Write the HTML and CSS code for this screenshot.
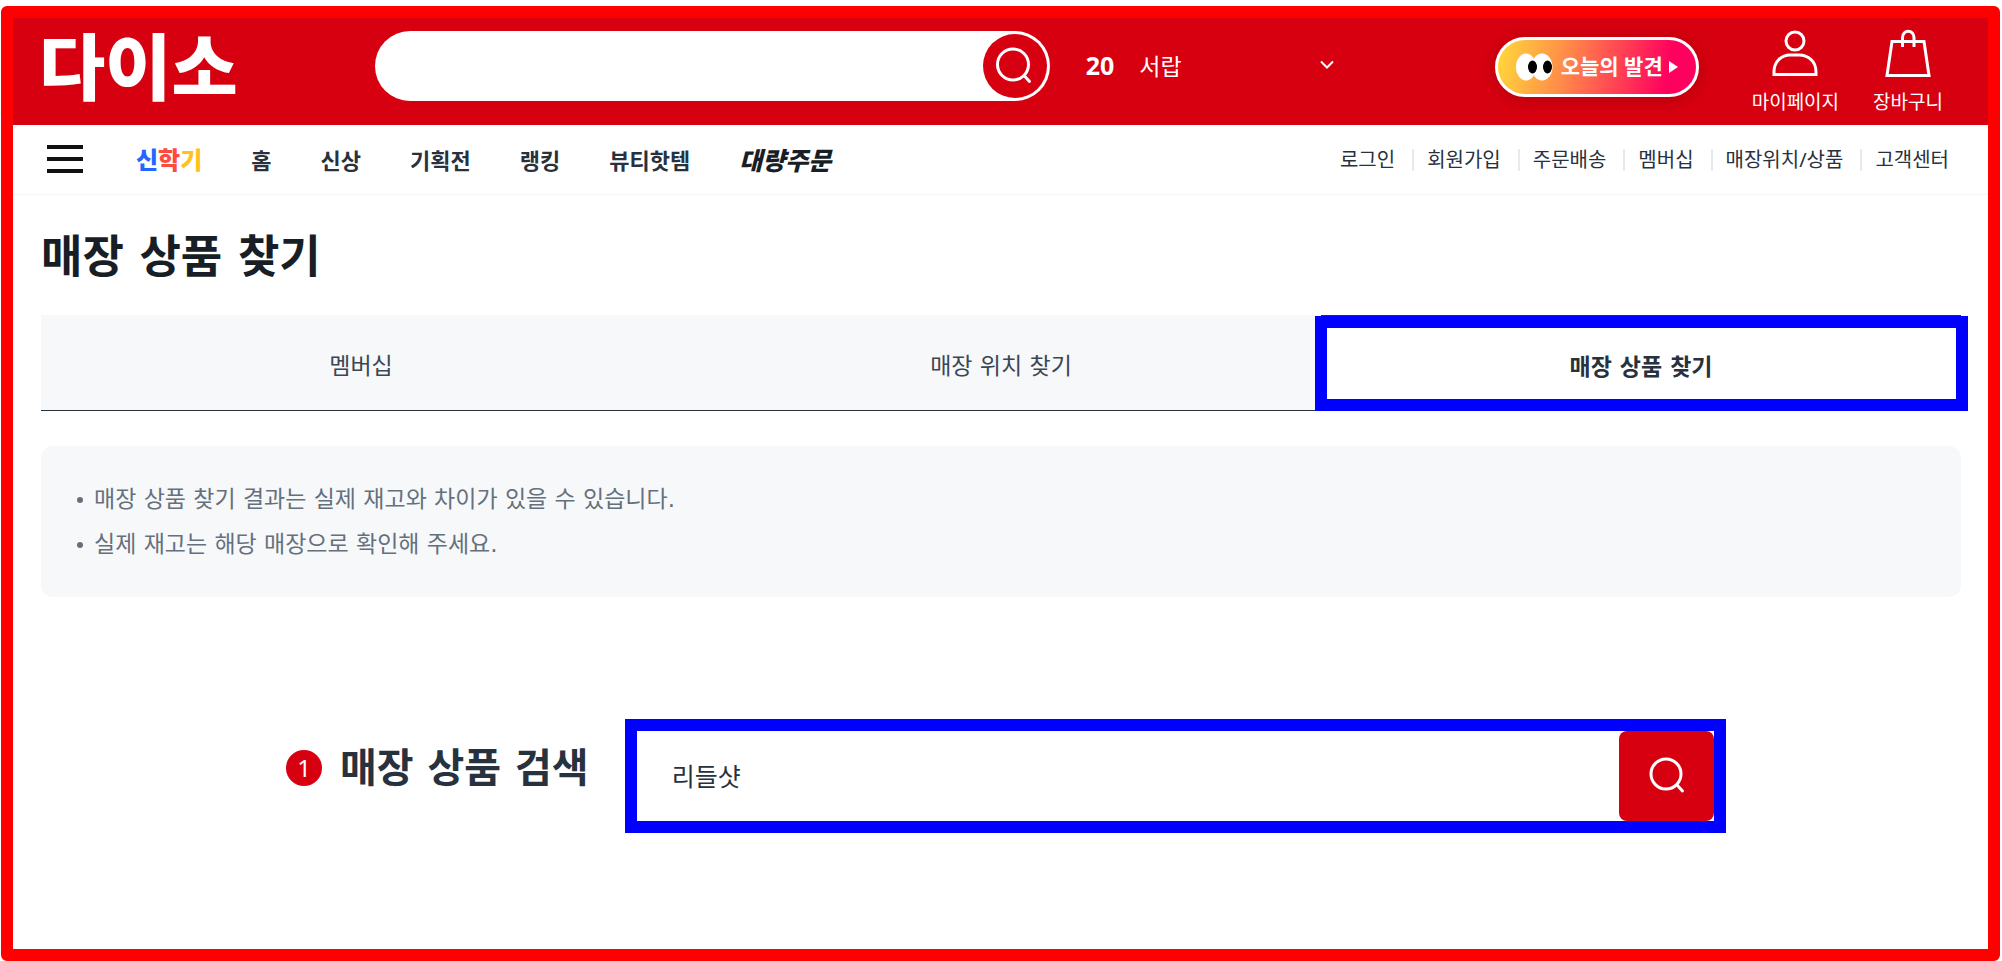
FILE: index.html
```html
<!DOCTYPE html>
<html lang="ko">
<head>
  <meta charset="UTF-8">
  <meta name="viewport" content="width=device-width, initial-scale=1.0">
  <title>매장 상품 찾기</title>
  <link rel="stylesheet" href="styles.css">
</head>
<body>
  <div class="page">
    <header class="header">
      <a class="logo" href="#">다이소</a>
      <form class="search">
        <input type="text" class="search-input" aria-label="검색어">
        <button type="button" class="search-btn" aria-label="검색">
          <svg width="40" height="40" viewBox="0 0 40 40" fill="none" stroke="#fff" stroke-width="3" stroke-linecap="round">
            <circle cx="18" cy="18.500" r="15.500"/>
            <path d="M29.500 30l5 5.500"/>
          </svg>
        </button>
      </form>
      <div class="rank">
        <span class="rank-num">20</span>
        <a class="rank-word" href="#">서랍</a>
        <button type="button" class="rank-toggle" aria-label="펼치기">
          <svg width="14" height="10" viewBox="0 0 14 10" fill="none" stroke="#fff" stroke-width="2">
            <path d="M1 1.5l6 6 6-6"/>
          </svg>
        </button>
      </div>
      <button type="button" class="today">
        <svg width="37" height="28" viewBox="0 0 37 28">
          <ellipse cx="10" cy="14" rx="10" ry="13.5" fill="#fff"/>
          <ellipse cx="26" cy="14" rx="10.5" ry="13.5" fill="#fff"/>
          <ellipse cx="16.5" cy="14" rx="4.5" ry="6.5" fill="#000"/>
          <ellipse cx="31.5" cy="14" rx="4.5" ry="6.5" fill="#000"/>
        </svg>
        <span>오늘의 발견</span>
        <svg width="9" height="12" viewBox="0 0 9 12" fill="#fff"><path d="M0 0l9 6-9 6z"/></svg>
      </button>
      <nav class="user">
        <a href="#">
          <svg width="48" height="48" viewBox="0 0 48 48" fill="none" stroke="#fff" stroke-width="3">
            <circle cx="24" cy="12" r="9"/>
            <path d="M3 45.500V43C3 32 11 26 19 26h9c9 0 17 6 17 17v2.500z"/>
          </svg>
          <span>마이페이지</span>
        </a>
        <a href="#">
          <svg width="48" height="48" viewBox="0 0 48 48" fill="none" stroke="#fff" stroke-width="3">
            <path d="M8 12.500h32l5 34H3z"/>
            <path d="M18.500 18V8.500a5.500 6 0 0 1 11.500 0V18"/>
          </svg>
          <span>장바구니</span>
        </a>
      </nav>
    </header>

    <div class="nav">
      <button type="button" class="menu-btn" aria-label="전체 메뉴">
        <span></span><span></span><span></span>
      </button>
      <nav class="main-menu">
        <a class="school" href="#"><span class="blue">신</span><span class="coral">학</span><span class="yellow">기</span></a>
        <a href="#">홈</a>
        <a href="#">신상</a>
        <a href="#">기획전</a>
        <a href="#">랭킹</a>
        <a href="#">뷰티핫템</a>
        <a class="bulk" href="#">대량주문</a>
      </nav>
      <nav class="sub-menu">
        <a href="#">로그인</a>
        <a href="#">회원가입</a>
        <a href="#">주문배송</a>
        <a href="#">멤버십</a>
        <a href="#">매장위치/상품</a>
        <a href="#">고객센터</a>
      </nav>
    </div>

    <main class="content">
      <h1>매장 상품 찾기</h1>
      <div class="tabs">
        <a class="tab" href="#">멤버십</a>
        <a class="tab" href="#">매장 위치 찾기</a>
        <a class="tab active" href="#">매장 상품 찾기</a>
      </div>
      <ul class="notice">
        <li>매장 상품 찾기 결과는 실제 재고와 차이가 있을 수 있습니다.</li>
        <li>실제 재고는 해당 매장으로 확인해 주세요.</li>
      </ul>
      <div class="finder">
        <h2><span class="step">1</span><label for="product">매장 상품 검색</label></h2>
        <form class="finder-form">
          <input type="text" id="product" value="리들샷">
          <button type="button" aria-label="상품 검색">
            <svg width="40" height="40" viewBox="0 0 40 40" fill="none" stroke="#fff" stroke-width="3" stroke-linecap="round">
              <circle cx="19" cy="18" r="15"/>
              <path d="M30.500 29.500l5 5.500"/>
            </svg>
          </button>
        </form>
      </div>
    </main>
  </div>
</body>
</html>
```

FILE: styles.css
```css
* {
  box-sizing: border-box;
}
body {
  margin: 0;
  padding: 6px 2px 0 1px;
  min-height: 100vh;
  display: flex;
  background-color: #fff;
  color: #27323e;
  font-family: "Noto Sans", "Noto Sans CJK KR", sans-serif;
}
a {
  color: inherit;
  text-decoration: none;
}
button {
  border: none;
  padding: 0;
  font-family: inherit;
  cursor: pointer;
}
input {
  border: none;
  outline: none;
  min-width: 0;
  font-family: inherit;
  color: inherit;
}
svg {
  display: block;
  flex: none;
}
.page {
  flex: 1;
  min-width: 0;
  border: 12px solid #f00;
  border-radius: 6px;
}

/* header */
.header {
  display: flex;
  align-items: center;
  height: 107px;
  padding: 0 45px 0 26px;
  background-color: #d70010;
  color: #fff;
  white-space: nowrap;
}
.logo {
  width: 336px;
  font-size: 72px;
  font-weight: 900;
  line-height: 72px;
  padding-bottom: 12px;
}
.search {
  flex: 1;
  display: flex;
  height: 70px;
  margin-bottom: 12px;
  padding: 3px;
  border-radius: 35px;
  background-color: #fff;
}
.search-input {
  flex: 1;
  padding: 0 30px;
  border-radius: 35px;
  background: none;
  color: #27323e;
  font-size: 22px;
}
.search-btn {
  display: flex;
  align-items: center;
  justify-content: center;
  width: 64px;
  height: 64px;
  border-radius: 50%;
  background-color: #d70010;
}
.rank {
  display: flex;
  align-items: center;
  width: 248px;
  margin: 0 161px 14px 36px;
}
.rank-num {
  margin-right: 25px;
  font-size: 25px;
  font-weight: 700;
}
.rank-word {
  font-size: 23px;
}
.rank-toggle {
  margin-left: auto;
  background: none;
}
.today {
  display: flex;
  align-items: center;
  width: 204px;
  height: 60px;
  margin-bottom: 10px;
  padding-left: 18px;
  border: 3px solid #fff;
  border-radius: 30px;
  background: linear-gradient(100deg, #ffd93b 0%, #ff9048 32%, #ff005e 85%);
  box-shadow: 0 2px 16px rgba(120, 0, 0, 0.4);
  color: #fff;
  font-size: 21px;
  line-height: 28px;
  font-weight: 700;
}
.today span {
  margin: 0 6px 2px 8px;
}
.user {
  display: flex;
  gap: 34px;
  margin-left: 53px;
  padding-top: 2px;
  font-size: 19px;
  line-height: 28px;
}
.user a {
  display: flex;
  flex-direction: column;
  align-items: center;
  gap: 11px;
}

/* menu */
.nav {
  display: flex;
  align-items: center;
  height: 70px;
  padding: 0 39px 0 34px;
  border-bottom: 1px solid #f5f6f8;
  white-space: nowrap;
}
.menu-btn {
  display: flex;
  flex-direction: column;
  gap: 8px;
  width: 36px;
  margin-right: 53px;
  margin-bottom: 2px;
  background: none;
}
.menu-btn span {
  height: 4px;
  background-color: #111;
}
.main-menu {
  display: flex;
  align-items: center;
  gap: 49px;
  padding-bottom: 2px;
  font-size: 22px;
  font-weight: 700;
}
.school {
  font-size: 24px;
  font-weight: 900;
}
.blue {
  color: #2267ff;
}
.coral {
  color: #ff4a3d;
}
.yellow {
  color: #ffc21a;
}
.bulk {
  color: #171e26;
  font-size: 25px;
  font-weight: 900;
  font-style: italic;
}
.sub-menu {
  display: flex;
  margin-left: auto;
  padding-top: 1px;
  font-size: 20px;
  line-height: 22px;
}
.sub-menu a + a {
  margin-left: 17px;
  padding-left: 13px;
  border-left: 2px solid #e8e9f0;
}

/* content */
.content {
  padding: 0 27px 0 28px;
}
h1 {
  margin: 0;
  padding: 27px 0 21px;
  color: #171e26;
  font-family: "DejaVu Sans", "Noto Sans CJK KR", sans-serif;
  font-size: 45px;
  line-height: 72px;
}
.tabs {
  display: grid;
  grid-template-columns: repeat(3, 1fr);
  font-family: "DejaVu Sans", "Noto Sans CJK KR", sans-serif;
  font-size: 23px;
}
.tab {
  display: flex;
  align-items: center;
  justify-content: center;
  height: 96px;
  padding-top: 2px;
  border-bottom: 1px solid #27323e;
  background-color: #f7f8fa;
  color: #3b4653;
}
.tab.active {
  position: relative;
  border-top: 1px solid #27323e;
  border-bottom: none;
  background-color: #fff;
  color: #27323e;
  font-weight: 700;
}
.tab.active::after {
  content: "";
  position: absolute;
  top: 0;
  right: -7px;
  bottom: 0;
  left: -6px;
  border: 12px solid #00f;
}
.notice {
  margin: 35px 0 0;
  padding: 31px 36px 30px;
  border-radius: 12px;
  background-color: #f7f8fa;
  color: #65707d;
  font-family: "DejaVu Sans", "Noto Sans CJK KR", sans-serif;
  font-size: 23px;
  line-height: 45px;
  list-style: none;
}
.notice li {
  display: flex;
  align-items: center;
  gap: 11px;
}
.notice li::before {
  content: "";
  width: 6px;
  height: 6px;
  border-radius: 50%;
  background-color: #65707d;
}
.finder {
  display: flex;
  align-items: flex-start;
  margin: 122px 235px 60px 245px;
}
h2 {
  display: flex;
  align-items: center;
  gap: 18px;
  margin: 0;
  padding: 19px 36px 0 0;
  font-family: "DejaVu Sans", "Noto Sans CJK KR", sans-serif;
  font-size: 40px;
  line-height: 60px;
  white-space: nowrap;
}
.step {
  width: 36px;
  height: 36px;
  border-radius: 50%;
  background-color: #d70010;
  color: #fff;
  font-family: "Noto Sans", sans-serif;
  font-size: 24px;
  font-weight: 400;
  line-height: 36px;
  text-align: center;
}
.finder-form {
  flex: 1;
  display: flex;
  height: 114px;
  border: 12px solid #00f;
}
.finder-form input {
  flex: 1;
  padding: 0 35px 2px;
  font-size: 25px;
}
.finder-form button {
  display: flex;
  align-items: center;
  justify-content: center;
  width: 95px;
  border-radius: 8px;
  background-color: #d70010;
}
```
